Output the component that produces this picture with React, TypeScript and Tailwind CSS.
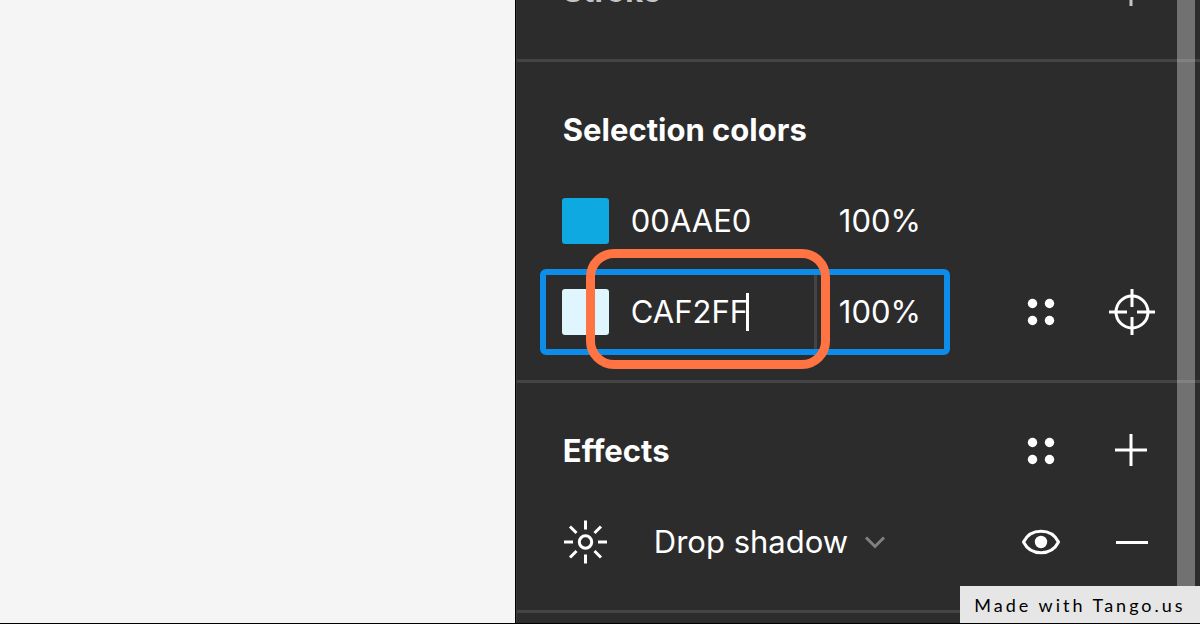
import type { ReactNode } from "react";

const ROW = "flex h-[91px] items-center justify-between";
const TEXT = "text-[31px] leading-10";

function IconButton({ label, children }: { label: string; children: ReactNode }) {
  return (
    <button type="button" aria-label={label} className="flex h-[91px] w-[91px] items-center justify-center">
      {children}
    </button>
  );
}

function DotsIcon() {
  return (
    <svg width="30" height="30" viewBox="0 0 30 30" fill="currentColor">
      <circle cx="6.5" cy="6.5" r="4.7" />
      <circle cx="23.5" cy="6.5" r="4.7" />
      <circle cx="6.5" cy="23.5" r="4.7" />
      <circle cx="23.5" cy="23.5" r="4.7" />
    </svg>
  );
}

function TargetIcon() {
  return (
    <svg width="48" height="48" viewBox="0 0 48 48" fill="none" stroke="currentColor" strokeWidth="3">
      <circle cx="24" cy="24" r="16" />
      <path d="M24 1v18M24 29v18M1 24h18M29 24h18" />
    </svg>
  );
}

function PlusIcon() {
  return (
    <svg width="34" height="34" viewBox="0 0 34 34" fill="none" stroke="currentColor" strokeWidth="3">
      <path d="M16 0v32M0 16h32" />
    </svg>
  );
}

function MinusIcon() {
  return (
    <svg width="34" height="34" viewBox="0 0 34 34" fill="none" stroke="currentColor" strokeWidth="3">
      <path d="M1 17.500h32" />
    </svg>
  );
}

function EyeIcon() {
  return (
    <svg width="40" height="28" viewBox="0 0 40 28" fill="none" stroke="currentColor" strokeWidth="3">
      <path d="M2.5 14C6 7 12.500 3.300 20 3.300S34 7 37.500 14C34 21 27.500 24.700 20 24.700S6 21 2.500 14Z" strokeLinejoin="round" />
      <circle cx="20" cy="14" r="6.200" fill="currentColor" stroke="none" />
    </svg>
  );
}

function ShadowIcon() {
  return (
    <svg width="46" height="46" viewBox="0 0 46 46" fill="none" stroke="currentColor" strokeWidth="3">
      <circle cx="22.500" cy="23" r="6.200" />
      <path d="M22.500 1.500v9M22.500 35.500v9M1 23h9M35 23h9M7 7.500l6.500 6.500M31.500 32l6.500 6.500M38 7.500L31.500 14M13.500 32L7 38.500" />
    </svg>
  );
}

function Section({ className = "", children }: { className?: string; children: ReactNode }) {
  return <section className={`border-b-[3px] border-[#444444] pt-[22px] pb-[23px] pr-[23px] ${className}`}>{children}</section>;
}

function ColorRow({ hex, swatch, active = false }: { hex: string; swatch: string; active?: boolean }) {
  return (
    <div className={`${ROW} pl-[23px]`}>
      <div
        className={`relative flex h-[86px] w-[410px] shrink-0 items-center rounded-md border-[6px] pl-4 ${
          active ? "border-[#0d8ce9]" : "border-transparent"
        }`}
      >
        <button type="button" aria-label={`Swatch ${hex}`} className={`h-[46px] w-[47px] shrink-0 rounded-[3px] ${swatch}`} />
        <div className="flex flex-1 items-center pl-[22px]">
          <input aria-label="Hex" defaultValue={hex} className={`${TEXT} field-sizing-content bg-transparent outline-none`} />
          {active && <span className="-ml-[2px] h-[38px] w-[3px] bg-white" />}
        </div>
        <div className={`flex h-full w-[130px] items-center border-l-[3px] pl-[22px] ${active ? "border-[#444444]" : "border-transparent"}`}>
          <input aria-label="Opacity" defaultValue="100%" className={`${TEXT} w-full bg-transparent outline-none`} />
        </div>
        {active && (
          <div className="pointer-events-none absolute -top-[26px] left-10 h-[120px] w-[244px] rounded-[28px] border-[9px] border-[#ff7442]" />
        )}
      </div>
      {active && (
        <div className="flex">
          <IconButton label="Styles"><DotsIcon /></IconButton>
          <IconButton label="Select all with this color"><TargetIcon /></IconButton>
        </div>
      )}
    </div>
  );
}

export default function App() {
  return (
    <div className="relative flex h-screen overflow-hidden border-b border-black bg-[#f5f5f5] font-['Inter',sans-serif]">
      <main className="flex-1" />
      <aside className="relative w-[57.1%] shrink-0 border-l border-black bg-[#2c2c2c] text-white">
        <div className="h-full overflow-hidden border-l border-[#383838]">
          <Section className="-mt-[77px]">
            <div className={`${ROW} pl-[46px] text-[#c4c4c4]`}>
              <h2 className={`${TEXT} font-bold`}>Stroke</h2>
              <IconButton label="Add stroke"><PlusIcon /></IconButton>
            </div>
          </Section>
          <Section>
            <div className={`${ROW} pl-[46px]`}>
              <h2 className={`${TEXT} font-bold`}>Selection colors</h2>
            </div>
            <ColorRow hex="00AAE0" swatch="bg-[#0da9e0]" />
            <ColorRow hex="CAF2FF" swatch="bg-[#dff6ff]" active />
          </Section>
          <Section>
            <div className={`${ROW} pl-[46px]`}>
              <h2 className={`${TEXT} font-bold`}>Effects</h2>
              <div className="flex">
                <IconButton label="Effect styles"><DotsIcon /></IconButton>
                <IconButton label="Add effect"><PlusIcon /></IconButton>
              </div>
            </div>
            <div className={`${ROW} pl-[46px]`}>
              <div className="flex items-center">
                <button type="button" aria-label="Effect settings"><ShadowIcon /></button>
                <div className="flex items-center pl-[45px]">
                  <select aria-label="Effect" className={`${TEXT} field-sizing-content appearance-none bg-transparent outline-none`}>
                    <option>Drop shadow</option>
                  </select>
                  <svg width="22" height="14" viewBox="0 0 22 14" fill="none" stroke="#808080" strokeWidth="3" className="ml-4">
                    <path d="M2 2.500l9 9 9-9" />
                  </svg>
                </div>
              </div>
              <div className="flex">
                <IconButton label="Toggle visibility"><EyeIcon /></IconButton>
                <IconButton label="Remove effect"><MinusIcon /></IconButton>
              </div>
            </div>
          </Section>
        </div>
        <div className="absolute inset-y-0 right-[5px] w-[18px] bg-white/33" />
      </aside>
      <a
        href="#tango"
        className="absolute right-0 bottom-0 flex h-[37px] w-60 items-center justify-center bg-[#e6e6e6] font-['Lato',sans-serif] text-lg tracking-[3px] whitespace-nowrap text-black"
      >
        Made with Tango.us
      </a>
    </div>
  );
}
